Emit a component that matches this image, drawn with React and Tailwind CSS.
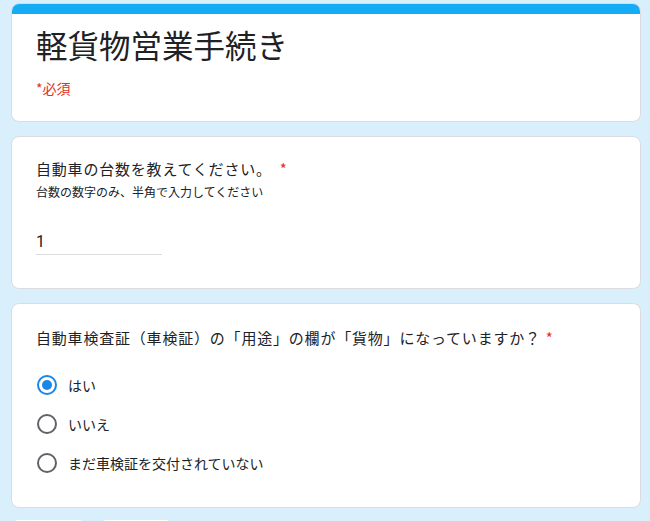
import React from "react"

const font = {
  fontFamily: '"Noto Sans CJK JP", "Noto Sans", Roboto, sans-serif',
}

const Required = ({ gap }) => (
  <span className={gap ? "ml-[8px] text-[#e0312a]" : "ml-[5px] text-[#e0312a]"}>*</span>
)

const Radio = ({ checked, label }) => (
  <label className="flex h-[39px] items-center">
    <span
      className={
        checked
          ? "flex h-[20px] w-[20px] items-center justify-center rounded-full border-2 border-[#1a86e6]"
          : "flex h-[20px] w-[20px] items-center justify-center rounded-full border-2 border-[#5f6368]"
      }
    >
      {checked && <span className="h-[10px] w-[10px] rounded-full bg-[#1a86e6]" />}
    </span>
    <span className="ml-[11px] text-[14px] leading-5 text-[#202124]">{label}</span>
  </label>
)

export default function App() {
  return (
    <div className="min-h-screen bg-[#daeffc]" style={font}>
      <div className="flex w-[630px] flex-col gap-[14px] pl-[11px] pt-[3px] box-content">
        <div className="overflow-hidden rounded-lg border border-[#dadce0] bg-white">
          <div className="h-[10px] bg-[#16acf5]" />
          <div className="px-[24px] pb-[23px] pt-[11px]">
            <h1 className="text-[31.5px] leading-[38px] text-[#202124]">軽貨物営業手続き</h1>
            <p className="mt-[15px] text-[14px] leading-5 text-[#e0312a]">*必須</p>
          </div>
        </div>

        <div className="rounded-lg border border-[#dadce0] bg-white px-[24px] pb-[33px] pt-[20px]">
          <p className="text-[15px] leading-6 tracking-[0.8px] text-[#202124]">
            自動車の台数を教えてください。
            <Required gap />
          </p>
          <p className="mt-[3px] text-[12px] leading-4 text-[#202124]">
            台数の数字のみ、半角で入力してください
          </p>
          <div className="mt-[30px] w-[126px] border-b border-[#dadce0]">
            <span
              className="block text-[16px] leading-6 text-[#202124]"
              style={{ fontFamily: "Roboto, sans-serif" }}
            >
              1
            </span>
          </div>
        </div>

        <div className="rounded-lg border border-[#dadce0] bg-white px-[24px] pb-[25px] pt-[22px]">
          <p className="text-[15px] leading-6 tracking-[0.8px] text-[#202124]">
            自動車検査証（車検証）の「用途」の欄が「貨物」になっていますか？
            <Required />
          </p>
          <div className="mt-[15px] flex flex-col pl-[1px]">
            <Radio checked label="はい" />
            <Radio label="いいえ" />
            <Radio label="まだ車検証を交付されていない" />
          </div>
        </div>

        <div className="-mt-[2px] flex gap-[15px] pl-[1px]">
          <div className="h-[36px] w-[73px] rounded-t-md bg-white" />
          <div className="h-[36px] w-[72px] rounded-t-md bg-white" />
        </div>
      </div>
    </div>
  )
}
